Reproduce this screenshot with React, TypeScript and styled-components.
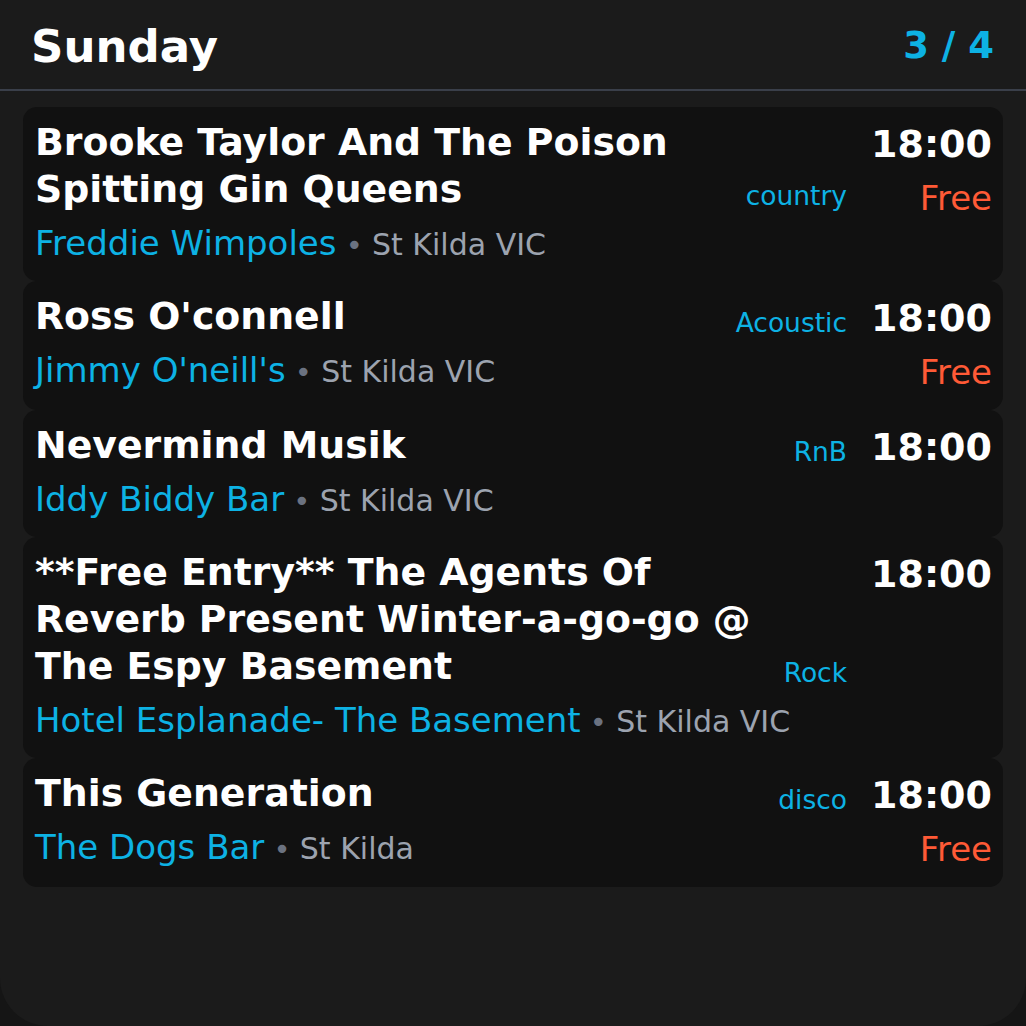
import React from "react";
import styled, { createGlobalStyle } from "styled-components";

const GlobalStyle = createGlobalStyle`
  html, body {
    margin: 0;
    padding: 0;
    background: #151515;
  }
  body {
    font-family: "DejaVu Sans", "Liberation Sans", sans-serif;
  }
  * { box-sizing: border-box; }
`;

const Panel = styled.div`
  width: 1026px;
  height: 1026px;
  background: #1b1b1b;
  border-radius: 0 0 48px 48px;
  overflow: hidden;
  display: flex;
  flex-direction: column;
`;

const Header = styled.header`
  height: 91px;
  padding: 4px 32px 0 31px;
  display: flex;
  align-items: center;
  justify-content: space-between;
  border-bottom: 2px solid #3a3f4a;
`;

const DayTitle = styled.h1`
  margin: 0;
  font-size: 45px;
  font-weight: 700;
  color: #ffffff;
  line-height: 1.2;
`;

const Counter = styled.span`
  font-size: 37px;
  font-weight: 700;
  color: #0db2e4;
  line-height: 1.2;
`;

const List = styled.div`
  padding: 16px 23px 0;
  display: flex;
  flex-direction: column;
`;

const Card = styled.article`
  background: #111111;
  border-radius: 14px;
  padding: 12px 11px 17px 12px;
  display: flex;
  gap: 24px;
`;

const Main = styled.div`
  flex: 1;
  min-width: 0;
  display: flex;
  flex-direction: column;
  gap: 9px;
`;

const TitleRow = styled.div`
  display: flex;
  align-items: flex-end;
  gap: 16px;
`;

const Title = styled.h2`
  flex: 1;
  margin: 0;
  font-size: 37.8px;
  font-weight: 700;
  line-height: 47px;
  color: #ffffff;
`;

const Genre = styled.span`
  flex: none;
  font-size: 26.5px;
  line-height: 34px;
  color: #0db2e4;
`;

const VenueLine = styled.div`
  height: 42px;
  font-size: 34px;
  line-height: 42px;
  white-space: nowrap;
`;

const Venue = styled.span`
  font-size: 34px;
  line-height: 1;
  color: #0db2e4;
`;

const Dot = styled.span`
  font-size: 29px;
  line-height: 1;
  color: #6b7280;
`;

const Suburb = styled.span`
  font-size: 30px;
  line-height: 1;
  color: #9ca3af;
`;

const Side = styled.div`
  flex: none;
  padding-top: 2px;
  display: flex;
  flex-direction: column;
  align-items: flex-end;
  gap: 9px;
`;

const Time = styled.span`
  font-size: 38px;
  font-weight: 700;
  line-height: 47px;
  color: #ffffff;
`;

const Price = styled.span`
  font-size: 34px;
  line-height: 42px;
  color: #ff5a36;
`;

type EventItem = {
  title: string;
  genre: string;
  time: string;
  price?: string;
  venue: string;
  suburb: string;
};

const events: EventItem[] = [
  {
    title: "Brooke Taylor And The Poison Spitting Gin Queens",
    genre: "country",
    time: "18:00",
    price: "Free",
    venue: "Freddie Wimpoles",
    suburb: "St Kilda VIC",
  },
  {
    title: "Ross O'connell",
    genre: "Acoustic",
    time: "18:00",
    price: "Free",
    venue: "Jimmy O'neill's",
    suburb: "St Kilda VIC",
  },
  {
    title: "Nevermind Musik",
    genre: "RnB",
    time: "18:00",
    venue: "Iddy Biddy Bar",
    suburb: "St Kilda VIC",
  },
  {
    title:
      "**Free Entry** The Agents Of Reverb Present Winter-a-go-go @ The Espy Basement",
    genre: "Rock",
    time: "18:00",
    venue: "Hotel Esplanade- The Basement",
    suburb: "St Kilda VIC",
  },
  {
    title: "This Generation",
    genre: "disco",
    time: "18:00",
    price: "Free",
    venue: "The Dogs Bar",
    suburb: "St Kilda",
  },
];

export default function App() {
  return (
    <>
      <GlobalStyle />
      <Panel>
        <Header>
          <DayTitle>Sunday</DayTitle>
          <Counter>3 / 4</Counter>
        </Header>
        <List>
          {events.map((e, i) => (
            <Card key={i}>
              <Main>
                <TitleRow>
                  <Title>{e.title}</Title>
                  <Genre>{e.genre}</Genre>
                </TitleRow>
                <VenueLine>
                  <Venue>{e.venue}</Venue>
                  <Dot> • </Dot>
                  <Suburb>{e.suburb}</Suburb>
                </VenueLine>
              </Main>
              <Side>
                <Time>{e.time}</Time>
                {e.price && <Price>{e.price}</Price>}
              </Side>
            </Card>
          ))}
        </List>
      </Panel>
    </>
  );
}
